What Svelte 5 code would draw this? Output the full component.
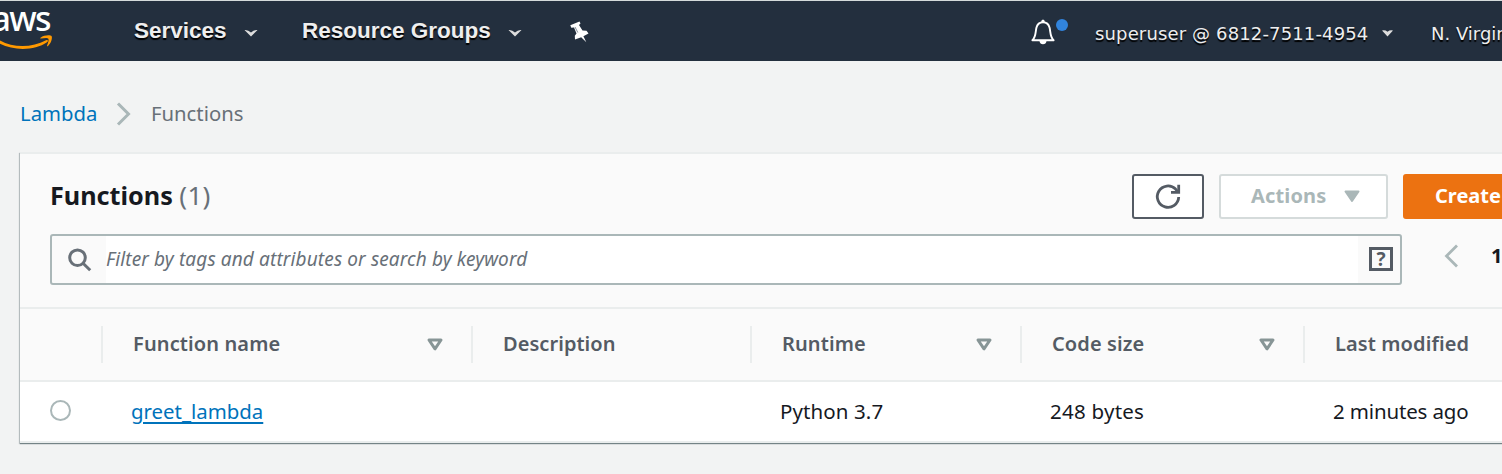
<script>
  const columns = [
    { label: 'Function name', width: 370, spacing: 0.12, sort: true },
    { label: 'Description', width: 279, spacing: 0.05, sort: false },
    { label: 'Runtime', width: 270, spacing: 0.1, sort: true },
    { label: 'Code size', width: 283, spacing: 0.1, sort: true },
    { label: 'Last modified', width: 330, spacing: 0.1, sort: false }
  ];
</script>

<div class="page">
  <header>
    <div class="logo">
      <span>aws</span>
      <svg width="53" height="14" viewBox="0 0 53 14"><path d="M-6 1C7 13 30 14 46 5.300C48 4.500 48.700 6 47 7.300C33 17 8 16-6 5z" fill="#f90" /><path d="M40.500 2.800C44 0 50.500-.300 51.700 1.300C52.500 3.300 51 8.700 47.800 11.200C47.200 11.600 46.800 11.200 47.100 10.500C48.200 7.500 49 4.700 48.400 3.700C47.500 2.600 44 3.300 41 3.600C40.200 3.600 40 3.200 40.500 2.800z" fill="#f90" /></svg>
    </div>
    <nav>
      <div class="item services"><span>Services</span><svg width="14" height="8" viewBox="0 0 14 8"><path d="M.5 1Q4 .5 7 3.500Q10 .5 13.500 1L7 7.500z" fill="#ddd" /></svg></div>
      <div class="item groups"><span>Resource Groups</span><svg width="14" height="8" viewBox="0 0 14 8"><path d="M.5 1Q4 .5 7 3.500Q10 .5 13.500 1L7 7.500z" fill="#ddd" /></svg></div>
      <svg class="pin" width="19" height="22" viewBox="0 0 19 22"><path d="M.3 4.300L9.500.400L10.500 2.600L9 4L12.500 9.500L16.500 9.800L18.500 12.500L13.400 15.200L16.300 21.200L11.200 16.200L5 18.500L4.800 14.800L6.500 12.500L4 6.500L1.300 6.800z" fill="#fff" /><path d="M5 6L7.800 11.500" stroke="#687582" stroke-width=".8" /></svg>
    </nav>
    <div class="account">
      <svg class="bell" width="24" height="26" viewBox="0 0 24 26"><path d="M1.400 21.300C5 18 4.400 13 5.400 8.700C6.300 5 8.500 3.200 12 3.200S17.700 5 18.600 8.700C19.600 13 19 18 22.600 21.300z" fill="none" stroke="#fff" stroke-width="1.900" stroke-linejoin="round" /><path d="M10.200 3Q10.200.5 12 .5T13.800 3zM8.500 22H15.500Q15 25.300 12 25.300T8.500 22z" fill="#fff" /></svg>
      <i class="dot"></i>
      <span class="user">superuser @ 6812-7511-4954</span>
      <svg class="caret" width="11" height="7" viewBox="0 0 11 7"><path d="M0 .5Q3-.3 5.500 1.700Q8-.3 11 .5L5.500 6.500z" fill="#ddd" /></svg>
      <span class="region">N. Virginia</span>
    </div>
  </header>

  <div class="crumbs">
    <a href="#lambda">Lambda</a>
    <svg width="15" height="24" viewBox="0 0 15 24"><path d="M2 1.500L12.500 12L2 22.500" fill="none" stroke="#aab7b8" stroke-width="3" /></svg>
    <span>Functions</span>
  </div>

  <main>
    <div class="title">
      <h1>Functions <em>(1)</em></h1>
      <button class="refresh" aria-label="Refresh"><svg width="26" height="26" viewBox="0 0 26 26" fill="none" stroke="#545b64" stroke-width="2.800"><path d="M23.700 13A10.700 10.700 0 1 1 20.600 5.100L22.500 7.500" /><path d="M23.700 .800V8.300H16" /></svg></button>
      <button class="actions"><span>Actions</span><svg width="16" height="13" viewBox="0 0 16 13"><path d="M1.500 1.500H14.500L8 11z" fill="#aab7b8" stroke="#aab7b8" stroke-width="2" stroke-linejoin="round" /></svg></button>
      <button class="create"><span>Create function</span></button>
    </div>

    <div class="filter">
      <div class="search">
        <svg class="lens" width="24" height="24" viewBox="0 0 24 24" fill="none" stroke="#687078" stroke-width="3"><circle cx="9.500" cy="9.700" r="7.800" /><path d="M15 15.200L22.200 22.300" /></svg>
        <span class="hint">Filter by tags and attributes or search by keyword</span>
        <span class="help">?</span>
      </div>
      <svg class="prev" width="15" height="24" viewBox="0 0 15 24"><path d="M13 1.500L2.500 12L13 22.500" fill="none" stroke="#aab7b8" stroke-width="2.800" /></svg>
      <b>1</b>
    </div>

    <div class="head">
      <div class="pick"></div>
      {#each columns as c}
        <div class="col" style:width="{c.width}px">
          <span style:letter-spacing="{c.spacing}px">{c.label}</span>
          {#if c.sort}
            <svg width="16" height="13" viewBox="0 0 16 13"><path d="M2 2H14L8 10.800z" fill="none" stroke="#879596" stroke-width="3" stroke-linejoin="round" /></svg>
          {/if}
        </div>
      {/each}
    </div>

    <div class="row">
      <div class="pick"><i></i></div>
      <div class="cell name"><a href="#greet">greet_lambda</a></div>
      <div class="cell desc"></div>
      <div class="cell runtime">Python 3.7</div>
      <div class="cell size">248 bytes</div>
      <div class="cell when">2 minutes ago</div>
    </div>
  </main>
</div>

<style>
  :global(body) { margin: 0; background: #f2f3f3; overflow: hidden; }
  .page { width: 1502px; height: 474px; overflow: hidden; background: #f2f3f3; font-family: "Noto Sans", "Open Sans", sans-serif; font-size: 20.500px; color: #16191f; white-space: nowrap; }
  svg { display: block; flex: none; overflow: visible; }
  header { display: flex; box-sizing: border-box; height: 61px; border-top: 1px solid #d5dbdb; background: #232f3e; color: #fff; }
  .logo { flex: none; width: 53px; margin-right: 81px; display: flex; flex-direction: column; align-items: flex-end; overflow: hidden; }
  .logo span { font-size: 34px; line-height: 35px; height: 34px; letter-spacing: -1.600px; padding-right: 3px; font-weight: 500; }
  nav { display: flex; flex: none; width: 908px; font: bold 22.500px/60px "Liberation Sans", Arial, sans-serif; color: #eee; text-shadow: 0 2px 1px #000; }
  .item { display: flex; }
  .item svg { margin-top: 28px; }
  .services { width: 168px; }
  .services span { width: 110px; }
  .groups { width: 268px; }
  .groups span { width: 206px; }
  .pin { margin-top: 20px; }
  .account { display: flex; flex: none; margin-left: -11px; color: #eee; font: 18px/66px "DejaVu Sans", Verdana, sans-serif; text-shadow: 0 2px 1px #000; }
  .bell { margin-top: 18px; }
  .dot { width: 12px; height: 12px; border-radius: 50%; background: #3184dd; margin: 18px 27px 0 1px; }
  .user { width: 287px; letter-spacing: .14px; }
  .caret { margin-top: 29px; }
  .region { margin-left: 38px; }
  .crumbs { display: flex; align-items: center; height: 28px; padding: 39px 0 23px 20px; color: #687078; }
  .crumbs a, .crumbs span { margin-top: -2px; font-size: 20.300px; }
  a { color: #0073bb; text-decoration: none; }
  .crumbs a { width: 96px; }
  .crumbs svg { margin-right: 20px; }
  main { width: 1613px; margin: 1px 0 0 20px; border-top: 2px solid #eaeded; box-sizing: border-box; height: 291px; background: #fafafa; box-shadow: 0 1px 1px rgba(0,28,36,.4), -1px 1px 1px rgba(0,28,36,.2); }
  .title { display: flex; padding: 20px 0 0 30px; height: 45px; }
  h1 { flex: none; width: 1082px; margin: 0; font-size: 25.200px; line-height: 43px; font-weight: 700; letter-spacing: 0; }
  h1 em { font-style: normal; font-weight: 400; color: #687078; font-size: 26px; letter-spacing: .3px; }
  button { box-sizing: border-box; height: 45px; border: 2px solid #545b64; border-radius: 3px; background: #fff; padding: 0; display: flex; align-items: center; font: bold 20px "Noto Sans", sans-serif; flex: none; white-space: nowrap; }
  .refresh { width: 72px; margin-right: 15px; justify-content: center; }
  .actions { width: 169px; margin-right: 15px; border-color: #d5dbdb; color: #aab7b8; padding-left: 30px; }
  .actions span { width: 93px; text-align: left; letter-spacing: .15px; }
  button span { margin-top: -2px; }
  .create { width: 215px; background: #ec7211; border-color: #ec7211; color: #fff; padding-left: 30px; }
  .filter { display: flex; padding: 15px 0 0 30px; box-sizing: border-box; height: 88px; }
  .search { box-sizing: border-box; display: flex; align-items: center; flex: none; width: 1352px; height: 51px; border: 2px solid #aab7b8; border-radius: 3px; }
  .lens { margin: 0 14px 0 16px; }
  .hint { width: 1252px; height: 47px; background: #fff; color: #687078; font-style: italic; font-size: 19px; letter-spacing: .13px; line-height: 47px; }
  .help { box-sizing: border-box; width: 24px; height: 24px; margin: -1px 0 0 11px; border: 3px solid #545b64; color: #545b64; font-size: 19px; font-weight: 700; line-height: 18px; text-align: center; }
  .prev { margin: 10px 32px 0 42px; }
  .filter b { line-height: 43px; font-weight: 700; font-size: 20px; }
  .head { display: flex; align-items: center; box-sizing: border-box; height: 75px; border: solid #eaeded; border-width: 2px 0; }
  .pick { width: 81px; flex: none; }
  .col { box-sizing: border-box; height: 37px; margin-top: -1px; display: flex; flex: none; align-items: center; justify-content: space-between; border-left: 2px solid #eaeded; padding: 0 28px 0 30px; color: #545b64; font-size: 20px; font-weight: 600; }
  .col span { margin-top: -1px; }
  .row { display: flex; align-items: center; box-sizing: border-box; height: 61px; background: #fff; border-bottom: 2px solid #eaeded; }
  .row i { display: block; box-sizing: border-box; width: 21px; height: 21px; margin: -2px 0 0 30px; border: 2px solid #aab7b8; border-radius: 50%; }
  .cell { flex: none; box-sizing: border-box; padding-left: 30px; line-height: 30px; margin-top: -2px; }
  .name { width: 370px; }
  .name a { font-size: 20.400px; text-decoration: underline; text-decoration-thickness: 2px; text-underline-offset: 3px; }
  .desc { width: 279px; }
  .runtime { width: 270px; letter-spacing: .1px; }
  .size { width: 283px; letter-spacing: .25px; }
  .when { letter-spacing: -.15px; }
</style>
